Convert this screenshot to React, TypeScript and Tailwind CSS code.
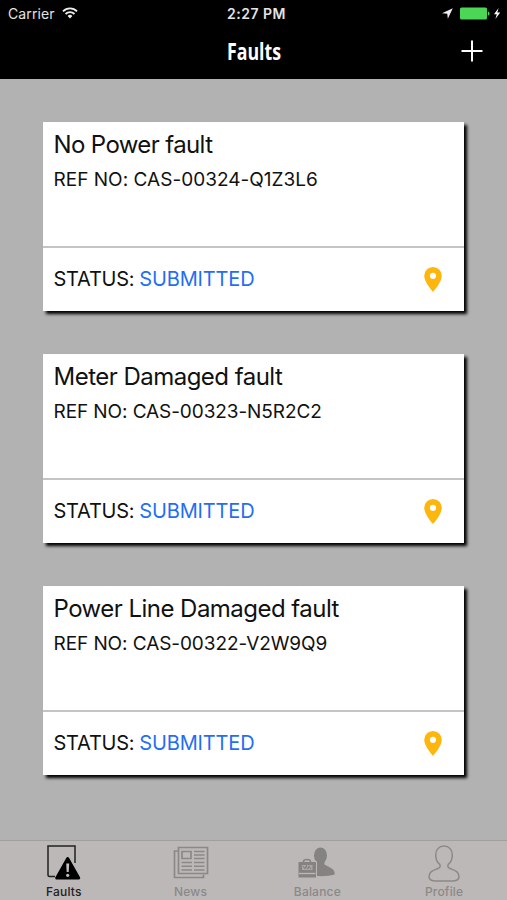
import type { ReactNode } from "react";

type Fault = {
  title: string;
  refNo: string;
  status: string;
  titleSpacing: string;
  refSpacing: string;
};

const faults: Fault[] = [
  { title: "No Power fault", refNo: "CAS-00324-Q1Z3L6", status: "SUBMITTED", titleSpacing: "tracking-[-0.62px]", refSpacing: "tracking-[0.02px]" },
  { title: "Meter Damaged fault", refNo: "CAS-00323-N5R2C2", status: "SUBMITTED", titleSpacing: "tracking-[-0.52px]", refSpacing: "tracking-[-0.09px]" },
  { title: "Power Line Damaged fault", refNo: "CAS-00322-V2W9Q9", status: "SUBMITTED", titleSpacing: "tracking-[-0.53px]", refSpacing: "tracking-[-0.08px]" },
];

function WifiIcon() {
  return (
    <svg width="16" height="12" viewBox="0 0 16 12" fill="none" stroke="#eee" strokeWidth="1.8">
      <path d="M1 4.3a10 10 0 0 1 14 0" />
      <path d="M3.5 7a6.4 6.4 0 0 1 9 0" />
      <path d="M5.6 8.9a3.4 3.4 0 0 1 4.8 0L8 11.4z" fill="#eee" stroke="none" />
    </svg>
  );
}

function StatusBar() {
  return (
    <div className="flex h-[26px] items-center pl-[8px] pr-[5px] text-[#e4e4e4]">
      <div className="flex flex-1 items-center gap-[7px]">
        <span className="text-[14px] tracking-[0.1px]">Carrier</span>
        <WifiIcon />
      </div>
      <span className="pl-[3px] text-[14px] font-semibold tracking-[0.5px]">2:27 PM</span>
      <div className="flex flex-1 items-center justify-end">
        <svg width="11" height="11" viewBox="0 0 11 11" fill="#eee">
          <path d="M10.8.2 0 5.2l5.3.6.5 5z" />
        </svg>
        <svg className="ml-[7px]" width="42" height="13" viewBox="0 0 42 13">
          <rect x="0" y="0.5" width="27" height="12" rx="1.5" fill="#4cd655" />
          <path d="M28 4.500c2 0 2 4 0 4z" fill="#4cd655" />
          <path d="M38.600 1 34 7.200h2.800L35.400 12 40.200 5.600h-2.900z" fill="#fff" />
        </svg>
      </div>
    </div>
  );
}

function Header() {
  return (
    <header className="h-[79px] shrink-0 bg-black text-white">
      <StatusBar />
      <div className="flex h-[49px] items-center pl-[25px] pr-[24px]">
        <div className="w-[22px]" />
        <h1 className="flex-1 scale-x-[0.74] text-center font-['Open_Sans'] text-[24px] font-bold leading-none">Faults</h1>
        <svg width="22" height="22" viewBox="0 0 22 22" stroke="#fff" strokeWidth="2">
          <path d="M11 .5v21M.5 11h21" />
        </svg>
      </div>
    </header>
  );
}

function PinIcon() {
  return (
    <svg width="18" height="25" viewBox="0 0 18 25" fill="#fdb60d">
      <path fillRule="evenodd" d="M9 0a8.800 8.800 0 0 0-8.800 8.800C.2 15.300 9 25 9 25s8.800-9.700 8.800-16.200A8.800 8.800 0 0 0 9 0zm0 5.700a3.100 3.100 0 1 1 0 6.200 3.100 3.100 0 0 1 0-6.200z" />
    </svg>
  );
}

function FaultCard({ fault }: { fault: Fault }) {
  return (
    <article className="flex h-[189px] flex-col bg-white text-[#111] shadow-[3px_3px_3px_#000]">
      <div className="h-[124px] pl-[10.5px] pt-[8px]">
        <h2 className={`text-[24px] leading-[30px] ${fault.titleSpacing}`}>{fault.title}</h2>
        <p className={`mt-[8px] text-[19px] leading-6 ${fault.refSpacing}`}>REF NO: {fault.refNo}</p>
      </div>
      <div className="flex flex-1 items-center justify-between border-t-2 border-[#c4c4c4] pb-[1px] pl-[10.5px] pr-[22px]">
        <p className="flex gap-[5px] text-[20px] leading-6">
          <span className="tracking-[-0.25px]">STATUS:</span>
          <span className="tracking-[-0.15px] text-[#1f6ff5]">{fault.status}</span>
        </p>
        <PinIcon />
      </div>
    </article>
  );
}

function FaultsIcon() {
  return (
    <svg width="34" height="36" viewBox="0 0 34 36">
      <path d="M8 31.500H2.500a1.500 1.500 0 0 1-1.500-1.500V1h27v17" fill="none" stroke="#222" strokeWidth="1.500" />
      <path d="M20.700 13.500 31.700 33H9.700z" fill="#000" stroke="#000" strokeWidth="3" strokeLinejoin="round" />
      <path d="M19.200 18.500h3l-.5 8.500h-2z" fill="#c4c0bf" />
      <circle cx="20.700" cy="30.300" r="1.600" fill="#c4c0bf" />
    </svg>
  );
}

function NewsIcon() {
  return (
    <svg width="36" height="34" viewBox="0 0 36 34" fill="none" stroke="#8b8888" strokeWidth="1.700">
      <path d="M5.500 1.500h29v26h-29z" />
      <path d="M5 5H1.500v26.500h29v-3" />
      <path d="M9 5.500h9v7H9z" />
      <path d="M21 5.500h10.500M21 9h10.500M21 12.500h10.500M8.500 16.500H19M21 16.500h10.500M8.500 20.200H19M21 20.200h10.500M8.500 24H19M21 24h10.500" strokeWidth="1.500" />
    </svg>
  );
}

function BalanceIcon() {
  return (
    <svg width="38" height="32" viewBox="0 0 38 32" fill="#858282">
      <ellipse cx="22.500" cy="8.500" rx="6.500" ry="8" />
      <path d="M18 13h8.500v4.500c3 2 6.500 3 8.500 5 1.200 1.200 1.700 3 1.700 5-5 1.300-11.500 2-17.700 1.500l-1-10z" />
      <path d="M0 14.500h18.500v16.500H0z" stroke="#bcb8b7" />
      <path d="M5.500 16v-1.500c0-1.500 1-2 3.500-2s3.500.5 3.500 2V16" fill="none" stroke="#858282" strokeWidth="1.500" />
      <path d="M4 18h10.500v5H4z" fill="#aaa6a5" />
      <path d="m5 19 2 3 1-3 2 3 1-3 2 3M8.500 17v3" fill="none" stroke="#858282" />
      <path d="M1 26.500h16.500" stroke="#bcb8b7" strokeWidth="1.300" />
    </svg>
  );
}

function ProfileIcon() {
  return (
    <svg width="32" height="37" viewBox="0 0 32 37" fill="none" stroke="#8b8888" strokeWidth="1.500">
      <path d="M16 1C10.800 1 7.700 5 7.700 10c0 4 1.500 7.400 4 9.300 1 1.700.5 3-1.200 3.900C6.500 25 1 26 1 31.500 1 35 4.500 36 8 36h16c3.500 0 7-1 7-4.500 0-5.500-5.500-6.500-9.500-8.300-1.700-.9-2.200-2.200-1.200-3.900 2.500-1.900 4-5.300 4-9.300C24.300 5 21.200 1 16 1z" />
    </svg>
  );
}

type Tab = { label: string; icon: ReactNode; active?: boolean };

const tabs: Tab[] = [
  { label: "Faults", icon: <FaultsIcon />, active: true },
  { label: "News", icon: <NewsIcon /> },
  { label: "Balance", icon: <BalanceIcon /> },
  { label: "Profile", icon: <ProfileIcon /> },
];

function TabBar() {
  return (
    <nav className="grid h-[60px] shrink-0 grid-cols-4 border-t border-[#a09e9e] bg-[#bcb8b7]">
      {tabs.map((tab) => (
        <div key={tab.label} className="flex flex-col items-center pl-[1px]">
          <div className="flex h-[44px] items-center justify-center">{tab.icon}</div>
          <span className={`text-[12px] font-medium leading-[14px] tracking-[0.2px] ${tab.active ? "text-[#222]" : "text-[#8b8888]"}`}>
            {tab.label}
          </span>
        </div>
      ))}
    </nav>
  );
}

export default function App() {
  return (
    <div className="flex h-[900px] w-[507px] flex-col overflow-hidden bg-[#b2b2b2] font-['Inter',sans-serif]">
      <Header />
      <main className="flex flex-1 flex-col gap-[43px] px-[43px] pt-[43px]">
        {faults.map((fault) => (
          <FaultCard key={fault.refNo} fault={fault} />
        ))}
      </main>
      <TabBar />
    </div>
  );
}
